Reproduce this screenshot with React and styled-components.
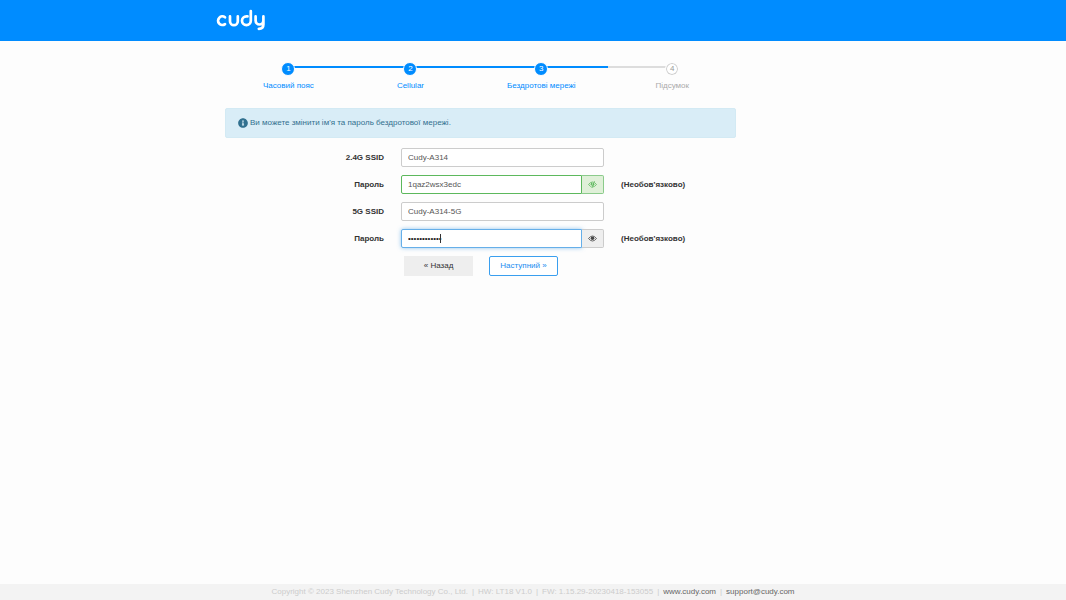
import React, { useState } from 'react';
import styled, { createGlobalStyle } from 'styled-components';
import { FaInfoCircle } from 'react-icons/fa';

const GlobalStyle = createGlobalStyle`
*{
    box-sizing:border-box;
}
body{
    margin:0;
    background:#fdfdfd;
    color:#333;
    font-family:"Liberation Sans", Arial, sans-serif;
    font-size:8px;
    line-height:12px;
}
input, button{
    font-family:inherit;
    font-size:inherit;
    line-height:inherit;
}
`;

const steps = ['Часовий пояс', 'Cellular', 'Бездротові мережі', 'Підсумок'];
const currentStep = 3;

function Logo() {
    return (
        <LogoSvg viewBox="0 0 50 22" role="img" aria-label="cudy">
            <path d="M9 8.3A4.3 4.3 0 1 0 9 15.1" />
            <path d="M14 7.4V12.2A3.9 3.9 0 0 0 21.8 12.2V7.4" />
            <path d="M34.8 2V11.8A4.4 4.4 0 1 1 30.4 7.4H31.5" />
            <path d="M39.6 7.4V11.6A3.9 3.9 0 0 0 47.4 11.6V7.4V15.4Q47.4 19.6 42.8 19.8" />
        </LogoSvg>
    );
}

function EyeIcon({ crossed }) {
    return (
        <EyeSvg viewBox="0 0 18 14" aria-hidden="true">
            <path d="M1 7Q9-3 17 7Q9 17 1 7Z" fill="none" stroke="currentColor" strokeWidth="1.6" />
            <circle cx="9" cy="6.4" r="3.6" fill="currentColor" />
            {crossed && <path d="M11.5 0L6 14" stroke="#dff0d8" strokeWidth="1.6" />}
            {crossed && <path d="M13 0L7.5 14" stroke="currentColor" strokeWidth="1.4" />}
        </EyeSvg>
    );
}

function PasswordField({ id, value, onChange, state }) {
    const [visible, setVisible] = useState(state === 'success');
    return (
        <InputGroup>
            <Input
                id={id}
                type={visible ? 'text' : 'password'}
                value={value}
                onChange={(e) => onChange(e.target.value)}
                $state={state}
                $grouped
            />
            {state === 'focus' && <Caret />}
            <Addon type="button" aria-label="Показати пароль" $state={state} onClick={() => setVisible(!visible)}>
                <EyeIcon crossed={visible} />
            </Addon>
        </InputGroup>
    );
}

export default function App() {
    const [form, setForm] = useState({
        ssid24: 'Cudy-A314',
        key24: '1qaz2wsx3edc',
        ssid5: 'Cudy-A314-5G',
        key5: '1qaz2wsx3edc',
    });
    const update = (name) => (value) => setForm({ ...form, [name]: value });

    return (
        <Page>
            <GlobalStyle />
            <Header>
                <HeaderInner>
                    <Logo />
                </HeaderInner>
            </Header>
            <Container>
                <Wizard>
                    <Stepper>
                        <Track />
                        <StepList>
                            {steps.map((label, i) => (
                                <Step key={label} $done={i < currentStep}>
                                    <StepNumber $done={i < currentStep}>{i + 1}</StepNumber>
                                    <span>{label}</span>
                                </Step>
                            ))}
                        </StepList>
                    </Stepper>
                    <Alert>
                        <FaInfoCircle size={10} />
                        <span>Ви можете змінити ім'я та пароль бездротової мережі.</span>
                    </Alert>
                    <Form onSubmit={(e) => e.preventDefault()}>
                        <Row>
                            <Label htmlFor="ssid24">2.4G SSID</Label>
                            <Input id="ssid24" value={form.ssid24} onChange={(e) => update('ssid24')(e.target.value)} />
                        </Row>
                        <Row>
                            <Label htmlFor="key24">Пароль</Label>
                            <PasswordField id="key24" value={form.key24} onChange={update('key24')} state="success" />
                            <Note>(Необов'язково)</Note>
                        </Row>
                        <Row>
                            <Label htmlFor="ssid5">5G SSID</Label>
                            <Input id="ssid5" value={form.ssid5} onChange={(e) => update('ssid5')(e.target.value)} />
                        </Row>
                        <Row>
                            <Label htmlFor="key5">Пароль</Label>
                            <PasswordField id="key5" value={form.key5} onChange={update('key5')} state="focus" />
                            <Note>(Необов'язково)</Note>
                        </Row>
                        <Row>
                            <Actions>
                                <Button type="button">« Назад</Button>
                                <Button type="submit" $primary>Наступний »</Button>
                            </Actions>
                        </Row>
                    </Form>
                </Wizard>
            </Container>
            <Footer>
                <span>Copyright © 2023 Shenzhen Cudy Technology Co., Ltd.</span>
                <span>|</span>
                <span>HW: LT18 V1.0</span>
                <span>|</span>
                <span>FW: 1.15.29-20230418-153055</span>
                <span>|</span>
                <FooterLink href="#www">www.cudy.com</FooterLink>
                <span>|</span>
                <FooterLink href="#support">support@cudy.com</FooterLink>
            </Footer>
        </Page>
    );
}

const Page = styled.div`
display:flex;
flex-direction:column;
min-height:100vh;
`;

const Header = styled.header`
background:#008cff;
`;

const HeaderInner = styled.div`
max-width:640px;
margin:0 auto;
padding:9px 3px 10px;
`;

const LogoSvg = styled.svg`
display:block;
width:50px;
height:22px;
fill:none;
stroke:#fff;
stroke-width:2.7;
stroke-linecap:round;
stroke-linejoin:round;
`;

const Container = styled.main`
flex:1;
width:100%;
max-width:640px;
margin:0 auto;
padding:21px 12px;
`;

const Wizard = styled.div`
width:83%;
`;

const Stepper = styled.div`
display:grid;
padding:0 47px 0 38px;
> *{
    grid-area:1 / 1;
}
`;

const Track = styled.div`
height:2px;
margin:4px 16px 0 25px;
background:linear-gradient(to right, #008cff 83%, #ddd 83%);
`;

const StepList = styled.ol`
display:flex;
justify-content:space-between;
margin:0;
padding:0;
list-style:none;
`;

const Step = styled.li`
display:flex;
flex-direction:column;
align-items:center;
gap:4px;
min-width:34px;
color:${(props) => (props.$done ? '#008cff' : '#aaa')};
`;

const StepNumber = styled.span`
width:14px;
height:14px;
border:1px solid #fdfdfd;
border-radius:50%;
background:${(props) => (props.$done ? '#008cff' : '#fff')};
box-shadow:${(props) => (props.$done ? 'none' : 'inset 0 0 0 1px #ccc')};
color:${(props) => (props.$done ? '#fff' : '#999')};
text-align:center;
`;

const Alert = styled.div`
display:flex;
align-items:center;
gap:2px;
margin:16px 0 10px;
padding:8px 12px;
border:1px solid #d3eaf4;
border-radius:2px;
background:#d9edf7;
color:#31708f;
`;

const Form = styled.form`
display:grid;
gap:8px;
`;

const Row = styled.div`
display:grid;
grid-template-columns:159px 203px 1fr;
column-gap:17px;
align-items:center;
`;

const Label = styled.label`
font-weight:bold;
text-align:right;
`;

const Note = styled.span`
font-weight:bold;
`;

const borders = {
    success: '#5cb85c',
    focus: '#66afe9',
};

const Input = styled.input`
width:100%;
min-width:0;
height:19px;
padding:0 6px;
border:1px solid ${(props) => borders[props.$state] || '#ccc'};
border-radius:${(props) => (props.$grouped ? '2px 0 0 2px' : '2px')};
background:#fff;
box-shadow:${(props) => (props.$state === 'focus' ? '0 0 4px rgba(102,175,233,0.7)' : 'none')};
color:${(props) => (props.$state === 'focus' ? '#222' : '#555')};
outline:none;
`;

const InputGroup = styled.div`
position:relative;
display:flex;
`;

const Caret = styled.span`
position:absolute;
top:5px;
left:39px;
width:1px;
height:9px;
background:#333;
`;

const Addon = styled.button`
display:flex;
flex:none;
align-items:center;
justify-content:center;
width:22px;
padding:0;
border:1px solid ${(props) => (props.$state === 'success' ? '#8bcb8b' : '#ccc')};
border-left:0;
border-radius:0 2px 2px 0;
background:${(props) => (props.$state === 'success' ? '#dff0d8' : '#eee')};
color:${(props) => (props.$state === 'success' ? '#5cb85c' : '#444')};
`;

const EyeSvg = styled.svg`
width:9px;
height:7px;
`;

const Actions = styled.div`
display:flex;
grid-column:2 / -1;
gap:16px;
padding-left:3px;
`;

const Button = styled.button`
width:69px;
height:20px;
padding:0;
border:1px solid ${(props) => (props.$primary ? '#3a9fef' : '#eee')};
border-radius:${(props) => (props.$primary ? '2px' : '0')};
background:${(props) => (props.$primary ? '#fff' : '#eee')};
color:${(props) => (props.$primary ? '#1a8cf0' : '#333')};
`;

const Footer = styled.footer`
display:flex;
justify-content:center;
gap:4px;
padding:2px 0;
background:#f3f3f3;
color:#ccc;
`;

const FooterLink = styled.a`
color:#666;
text-decoration:none;
`;
